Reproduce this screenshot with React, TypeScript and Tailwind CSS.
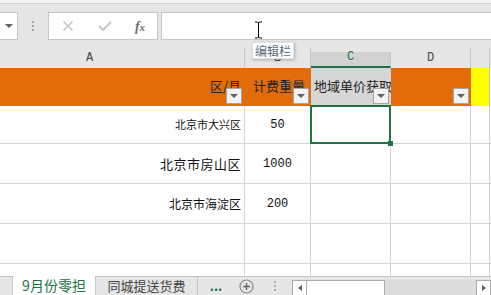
import React from 'react';

const FilterButton = () => (
  <div className="absolute right-[2px] bottom-[2px] w-[16px] h-[16px] bg-[#f3f3f3] border border-[#a6a6a6] flex items-center justify-center">
    <div className="w-0 h-0 border-l-[4px] border-r-[4px] border-t-[4px] border-l-transparent border-r-transparent border-t-[#5f5f5f]" />
  </div>
);

const rows = [
  { district: '北京市大兴区', size: 'text-[11px]', weight: '50', h: 'h-[38px]' },
  { district: '北京市房山区', size: 'text-[13px] tracking-[0.5px]', weight: '1000', h: 'h-[40px]' },
  { district: '北京市海淀区', size: 'text-[12px]', weight: '200', h: 'h-[40px]' },
];

const App: React.FC = () => {
  return (
    <div className="relative w-[491px] h-[295px] overflow-hidden bg-white font-['Noto_Sans_CJK_SC',sans-serif] select-none">
      {/* Top strip */}
      <div className="h-[4px] bg-[#f3f3f3] border-b border-[#d2d2d2]" />

      {/* Formula bar */}
      <div className="h-[44px] bg-[#e6e6e6] flex items-center">
        <div className="w-[18px] h-[28px] bg-white border border-[#c6c6c6] border-l-0 flex items-center justify-center">
          <div className="w-0 h-0 border-l-[4px] border-r-[4px] border-t-[4px] border-l-transparent border-r-transparent border-t-[#5f5f5f]" />
        </div>
        <div className="w-[30px] flex flex-col items-center gap-[2px]">
          <div className="w-[2px] h-[2px] bg-[#a9a9a9]" />
          <div className="w-[2px] h-[2px] bg-[#a9a9a9]" />
          <div className="w-[2px] h-[2px] bg-[#a9a9a9]" />
        </div>
        <div className="w-[110px] h-[28px] bg-white border border-[#c6c6c6] flex items-center">
          <div className="w-[38px] flex justify-center">
            <svg width="12" height="12" viewBox="0 0 12 12">
              <path d="M1.5 1.5 L10.5 10.5 M10.5 1.5 L1.5 10.5" stroke="#c8c8c8" strokeWidth="1.6" />
            </svg>
          </div>
          <div className="w-[36px] flex justify-center">
            <svg width="14" height="12" viewBox="0 0 14 12">
              <path d="M1 6 L5 10 L13 2" stroke="#c8c8c8" strokeWidth="2" fill="none" />
            </svg>
          </div>
          <div className="w-[34px] flex justify-center items-baseline font-['Liberation_Serif',serif] italic font-bold text-[14px] text-[#707070]">
            f<span className="text-[11px]">x</span>
          </div>
        </div>
        <div className="ml-[3px] flex-1 h-[28px] bg-white border border-[#c6c6c6] border-r-0" />
      </div>

      {/* Column headers */}
      <div className="h-[20px] bg-[#e6e6e6] flex text-[12px] font-['Liberation_Mono',monospace] text-[#444]">
        <div className="w-[245px] border-r border-[#c6c6c6] flex items-end pl-[86px] pb-[1px]">A</div>
        <div className="w-[66px] border-r border-[#c6c6c6] flex items-end justify-center pb-[1px]">B</div>
        <div className="w-[80px] mt-[4px] bg-[#d2d2d2] border-r border-[#c6c6c6] border-b-2 border-b-[#217346] flex items-end justify-center text-[#217346]">C</div>
        <div className="w-[80px] border-r border-[#c6c6c6] flex items-end justify-center pb-[1px]">D</div>
        <div className="w-[19px] border-r border-[#c6c6c6]" />
        <div className="flex-1" />
      </div>

      {/* Header row */}
      <div className="h-[38px] flex text-[13px] text-[#222]">
        <div className="relative w-[245px] bg-[#e36c0a] border-r border-[#e36c0a] flex items-center justify-end pr-[3px] pb-[3px]">
          区/县
          <FilterButton />
        </div>
        <div className="relative w-[66px] bg-[#e36c0a] overflow-hidden flex items-center pl-[8px] pb-[3px] whitespace-nowrap">
          计费重量
          <FilterButton />
        </div>
        <div className="relative w-[80px] bg-[#d6d6d6] overflow-hidden flex items-center pl-[3px] pb-[3px] whitespace-nowrap">
          地域单价获取
          <FilterButton />
        </div>
        <div className="relative w-[80px] bg-[#e36c0a]">
          <FilterButton />
        </div>
        <div className="w-[19px] bg-[#ffff00] border-r border-[#c6c6c6]" />
        <div className="flex-1" />
      </div>

      {/* Data rows */}
      {rows.map((r, i) => (
        <div key={r.district} className={`${r.h} flex border-b border-[#d4d4d4]`}>
          <div className={`w-[245px] border-r border-[#d4d4d4] flex items-center justify-end pr-[3px] text-[#111] ${r.size}`}>
            {r.district}
          </div>
          <div className="w-[66px] border-r border-[#d4d4d4] flex items-center justify-center font-['Liberation_Mono',monospace] text-[12px] text-[#111]">
            {r.weight}
          </div>
          <div className="relative w-[80px] border-r border-[#d4d4d4]">
            {i === 0 && (
              <>
                <div className="absolute -left-[1px] -top-[1px] right-[-1px] bottom-[-1px] border-2 border-[#217346]" />
                <div className="absolute z-10 right-[-3px] bottom-[-3px] w-[5px] h-[5px] bg-[#217346]" />
              </>
            )}
          </div>
          <div className="w-[80px] border-r border-[#d4d4d4]" />
          <div className="w-[19px] border-r border-[#d4d4d4]" />
          <div className="flex-1" />
        </div>
      ))}
      {[0, 1].map((k) => (
        <div key={k} className={`${k === 0 ? 'h-[40px] border-b' : 'h-[12px]'} flex border-[#d4d4d4]`}>
          <div className="w-[245px] border-r border-[#d4d4d4]" />
          <div className="w-[66px] border-r border-[#d4d4d4]" />
          <div className="w-[80px] border-r border-[#d4d4d4]" />
          <div className="w-[80px] border-r border-[#d4d4d4]" />
          <div className="w-[19px] border-r border-[#d4d4d4]" />
          <div className="flex-1" />
        </div>
      ))}

      {/* Sheet tabs */}
      <div className="h-[19px] flex bg-[#e6e6e6] text-[13px]">
        <div className="w-[12px] border-t border-[#c6c6c6]" />
        <div className="w-[84px] bg-white border-l border-r border-[#c6c6c6] flex items-center justify-center text-[#217346] text-[14px] pb-[1px]">
          9月份零担
        </div>
        <div className="w-[102px] border-t border-r border-[#c6c6c6] flex items-center justify-center text-[#444] pb-[1px]">
          同城提送货费
        </div>
        <div className="w-[36px] border-t border-[#c6c6c6] flex items-center justify-center text-[#217346] font-bold">
          ...
        </div>
        <div className="w-[24px] border-t border-[#c6c6c6] flex items-center justify-center">
          <svg width="15" height="15" viewBox="0 0 15 15">
            <circle cx="7.5" cy="7.5" r="6.5" stroke="#8a8a8a" strokeWidth="1.2" fill="none" />
            <path d="M7.5 4 V11 M4 7.5 H11" stroke="#666" strokeWidth="1.4" />
          </svg>
        </div>
        <div className="w-[34px] border-t border-[#c6c6c6] flex flex-col items-center justify-center gap-[2px]">
          <div className="w-[2px] h-[2px] bg-[#b0b0b0]" />
          <div className="w-[2px] h-[2px] bg-[#b0b0b0]" />
          <div className="w-[2px] h-[2px] bg-[#b0b0b0]" />
        </div>
        <div className="flex-1 border-t border-[#c6c6c6] pt-[3px] flex">
          <div className="w-[15px] h-[16px] bg-white border border-[#ababab] flex items-center justify-center">
            <div className="w-0 h-0 border-t-[3px] border-b-[3px] border-r-[4px] border-t-transparent border-b-transparent border-r-[#606060]" />
          </div>
          <div className="w-[78px] h-[16px] bg-white border border-l-0 border-[#ababab]" />
          <div className="flex-1 h-[16px] bg-[#dcdcdc]" />
          <div className="w-[15px] h-[16px] bg-white border border-[#ababab] flex items-center justify-center">
            <div className="w-0 h-0 border-t-[3px] border-b-[3px] border-l-[4px] border-t-transparent border-b-transparent border-l-[#606060]" />
          </div>
        </div>
      </div>

      {/* Tooltip over column header */}
      <div className="absolute left-[252px] top-[42px] px-[2px] h-[17px] bg-white border border-[#e0e0e0] shadow-[1px_1px_3px_rgba(0,0,0,0.25)] flex items-center text-[12px] text-[#5b6b7d]">
        编辑栏
      </div>
      {/* I-beam cursor */}
      <svg className="absolute left-[254px] top-[21px]" width="9" height="18" viewBox="0 0 9 18">
        <path d="M1 1 H3.5 M5.5 1 H8 M4.5 1.5 V16.5 M1 17 H3.5 M5.5 17 H8 M3.5 1 L4.5 2 L5.5 1 M3.5 17 L4.5 16 L5.5 17" stroke="#000" strokeWidth="1" fill="none" />
      </svg>
    </div>
  );
};

export default App;
